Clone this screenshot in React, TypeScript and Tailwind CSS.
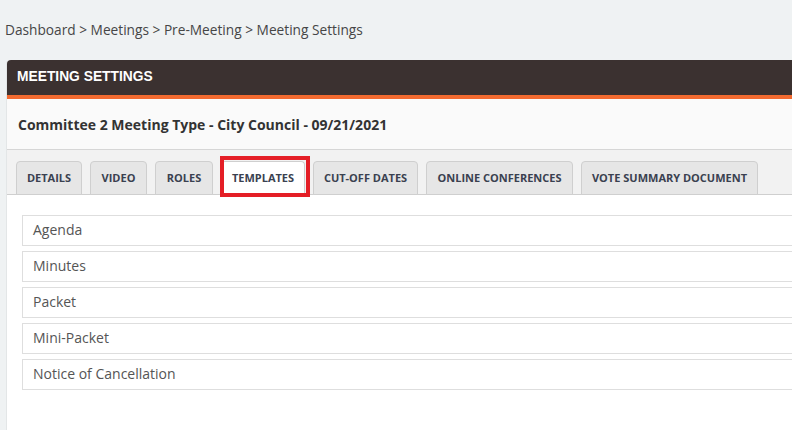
const tabs = [
  { label: "DETAILS", w: "w-[66px]" },
  { label: "VIDEO", w: "w-[57px]" },
  { label: "ROLES", w: "w-[58px]" },
  { label: "TEMPLATES", w: "w-[84px]", active: true },
  { label: "CUT-OFF DATES", w: "w-[105px]" },
  { label: "ONLINE CONFERENCES", w: "w-[147px]" },
  { label: "VOTE SUMMARY DOCUMENT", w: "w-[177px]" },
];

const templates = ["Agenda", "Minutes", "Packet", "Mini-Packet", "Notice of Cancellation"];

export default function App() {
  return (
    <div className="h-[430px] w-[792px] overflow-hidden bg-[#eff2f3] font-['Open_Sans','Liberation_Sans',sans-serif]">
      <div className="pl-[5px] pt-[21px] text-[13.7px] leading-[18px] text-[#464646]">
        Dashboard &gt; Meetings &gt; Pre-Meeting &gt; Meeting Settings
      </div>

      <div className="ml-[6px] mt-[21px] h-[400px] w-[820px] rounded-tl-[4px] border-l border-[#e3e6e7] bg-white">
        <div className="flex h-[35px] items-center rounded-tl-[4px] bg-[#3b3130] pl-[10px] font-['Liberation_Sans',sans-serif] text-[13.8px] font-bold text-white">
          MEETING SETTINGS
        </div>
        <div className="h-[4px] bg-[#f26a30]" />

        <div className="flex h-[51px] items-center border-b border-[#d6d6d6] bg-[#fafafa] pl-[11px] text-[14px] font-bold text-[#333]">
          Committee 2 Meeting Type - City Council - 09/21/2021
        </div>

        <div className="flex h-[45px] items-end gap-[8px] border-b border-[#cfcfcf] bg-[#f2f2f2] pl-[9px]">
          {tabs.map((t) => (
            <div key={t.label} className="relative">
              <div
                className={`${t.w} -mb-px flex h-[34px] items-center justify-center rounded-t-[4px] border text-[11px] font-bold ${
                  t.active
                    ? "border-[#cfcfcf] border-b-white bg-white text-[#3a4150]"
                    : "border-[#cfcfcf] bg-[#e6e6e6] text-[#3a4150]"
                }`}
              >
                {t.label}
              </div>
              {t.active && (
                <div className="pointer-events-none absolute -left-[1px] -top-[5px] h-[41px] w-[90px] border-[4px] border-[#e41e26]" />
              )}
            </div>
          ))}
        </div>

        <div className="flex flex-col gap-[5px] px-[15px] pt-[20px]">
          {templates.map((name) => (
            <div
              key={name}
              className="flex h-[31px] items-center border border-[#dedede] bg-white pb-[2px] pl-[10px] text-[14px] text-[#555]"
            >
              {name}
            </div>
          ))}
        </div>
      </div>
    </div>
  );
}
